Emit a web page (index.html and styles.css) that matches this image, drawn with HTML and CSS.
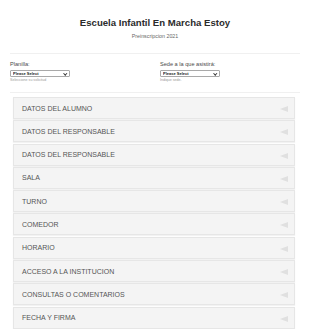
FILE: index.html
```html
<!DOCTYPE html>
<html lang="es">
<head>
    <meta charset="UTF-8">
    <meta name="viewport" content="width=device-width, initial-scale=1.0">
    <title>Escuela Infantil En Marcha Estoy</title>
    <link rel="stylesheet" href="styles.css">
</head>
<body>
    <div class="form">
        <div class="header">
            <h1>Escuela Infantil En Marcha Estoy</h1>
            <p class="sub">Preinscripcion 2021</p>
        </div>
        <div class="fields">
            <div class="field">
                <label>Planilla:</label>
                <div class="select-wrap"><select><option>Please Select</option></select></div>
                <span class="help">Seleccione su solicitud</span>
            </div>
            <div class="field">
                <label>Sede a la que asistirá:</label>
                <div class="select-wrap"><select><option>Please Select</option></select></div>
                <span class="help">Indique sede.</span>
            </div>
        </div>
        <div class="sections">
            <div class="section"><span>DATOS DEL ALUMNO</span><i class="arrow"></i></div>
            <div class="section"><span>DATOS DEL RESPONSABLE</span><i class="arrow"></i></div>
            <div class="section"><span>DATOS DEL RESPONSABLE</span><i class="arrow"></i></div>
            <div class="section"><span>SALA</span><i class="arrow"></i></div>
            <div class="section"><span>TURNO</span><i class="arrow"></i></div>
            <div class="section"><span>COMEDOR</span><i class="arrow"></i></div>
            <div class="section"><span>HORARIO</span><i class="arrow"></i></div>
            <div class="section"><span>ACCESO A LA INSTITUCION</span><i class="arrow"></i></div>
            <div class="section"><span>CONSULTAS O COMENTARIOS</span><i class="arrow"></i></div>
            <div class="section"><span>FECHA Y FIRMA</span><i class="arrow"></i></div>
        </div>
    </div>
</body>
</html>
```

FILE: styles.css
```css
body {
    font-family: 'Liberation Sans', Arial, sans-serif;
    margin: 0;
    background: #fff;
    color: #555;
}

.form {
    padding: 16px 10px 0 10px;
}

.header {
    text-align: center;
    padding-bottom: 14px;
    border-bottom: 1px solid #f0f0f0;
}

.header h1 {
    font-size: 9.6px;
    color: #2b2b2b;
    margin: 0;
    line-height: 13px;
}

.header .sub {
    font-size: 5.3px;
    color: #666;
    margin: 4px 0 0 0;
}

.fields {
    display: flex;
    padding: 7px 0 9px 0;
    border-bottom: 1px solid #f0f0f0;
}

.field {
    width: 150px;
    flex-shrink: 0;
    display: flex;
    flex-direction: column;
    align-items: flex-start;
}

.field + .field {
    width: auto;
    flex: 1;
}

.field label {
    font-size: 5.6px;
    line-height: 7px;
    color: #4a4a4a;
    margin-bottom: 2px;
}

.select-wrap {
    position: relative;
    width: 60px;
    height: 7px;
}

.select-wrap::after {
    content: "";
    position: absolute;
    right: 4px;
    top: 1.5px;
    width: 1.5px;
    height: 1.5px;
    border-right: 1px solid #333;
    border-bottom: 1px solid #333;
    transform: rotate(45deg);
    pointer-events: none;
}

.field select {
    -webkit-appearance: none;
    appearance: none;
    display: block;
    width: 60px;
    height: 7px;
    min-height: 0;
    font-size: 4px;
    font-weight: bold;
    line-height: 5px;
    padding: 0 2px;
    margin: 0;
    border: 1px solid #a9a9a9;
    border-radius: 1px;
    background: #fff;
    color: #222;
    font-family: 'Liberation Sans', Arial, sans-serif;
    box-sizing: border-box;
}

.field .help {
    font-size: 3.6px;
    line-height: 5px;
    color: #999;
    margin-top: 1px;
}

.sections {
    padding: 4px 5px 0 3px;
    display: flex;
    flex-direction: column;
    gap: 1.3px;
}

.section {
    height: 20px;
    background: #f4f4f4;
    border: 1px solid #e6e6e6;
    box-shadow: 0 1px 1px rgba(0, 0, 0, 0.05);
    display: flex;
    align-items: center;
    justify-content: space-between;
    padding: 0 6px 0 8px;
}

.section span {
    font-size: 7px;
    color: #555;
}

.arrow {
    width: 0;
    height: 0;
    border-top: 3px solid transparent;
    border-bottom: 3px solid transparent;
    border-right: 8px solid #e0e0e0;
    margin-top: 2px;
}
```
